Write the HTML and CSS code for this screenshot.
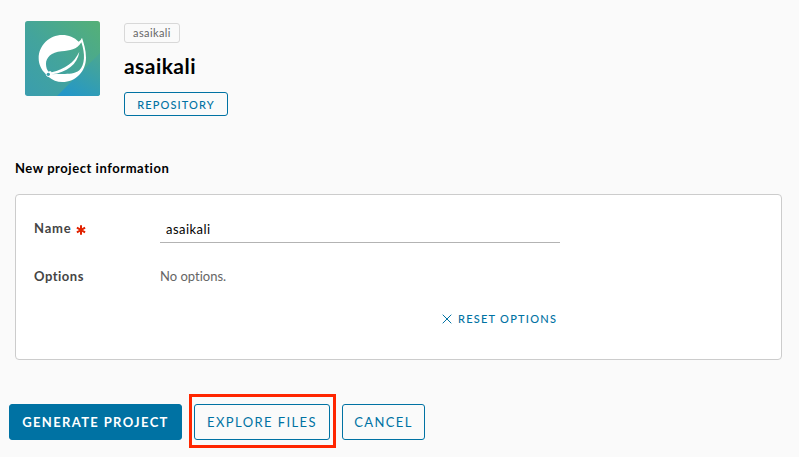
FILE: index.html
```html
<!DOCTYPE html>
<html lang="en">
<head>
<meta charset="utf-8">
<title>New project</title>
<link rel="stylesheet" href="styles.css">
</head>
<body>
<header class="header">
  <svg class="logo" viewBox="30 33 225 225" aria-hidden="true">
    <defs>
      <linearGradient id="green" x1="0" y1="1" x2="1" y2="0"><stop offset="0" stop-color="#3a9dae"/><stop offset=".45" stop-color="#43a49c"/><stop offset="1" stop-color="#55b077"/></linearGradient>
      <linearGradient id="blue" x1="0.2" y1="1" x2=".8" y2="0"><stop offset="0" stop-color="#2397c9"/><stop offset="1" stop-color="#48a694"/></linearGradient>
    </defs>
    <rect x="30" y="33" width="225" height="225" rx="8" fill="url(#green)"/>
    <path d="M126 258L255 129V250Q255 258 247 258Z" fill="url(#blue)"/>
    <path fill="#fff" fill-rule="evenodd" d="M201 83C206 99 213 119 213 143C213 184 182 216 142 216C126 216 112 210 101 201C96 201 93 197 92 192C79 180 71 163 71 145C71 106 103 75 142 75C161 75 178 82 191 95Q198 91 201 83ZM199 97C186 119 164 122 140 124C108 127 93 143 93 162C93 172 96 180 101 185C106 182 109 184 110 187C150 176 176 160 193 125C188 163 155 187 110 193C144 190 173 197 193 181C210 165 211 131 199 97Z"/>
    <circle cx="100" cy="193" r="5" fill="#3d9fac"/>
  </svg>
  <div class="summary">
    <span class="tag">asaikali</span>
    <h1 class="title">asaikali</h1>
    <button class="btn repository"><span>REPOSITORY</span></button>
  </div>
</header>
<main>
  <h2 class="heading">New project information</h2>
  <section class="card">
    <div class="row">
      <label class="label" for="name"><span class="name-text">Name</span>
        <svg class="required" viewBox="0 0 10 10" aria-hidden="true"><path d="M5 .3V9.7M.9 2.7L9.1 7.3M9.1 2.7L.9 7.3" stroke="#e12200" stroke-width="2"/></svg>
      </label>
      <input class="field" id="name" value="asaikali">
    </div>
    <div class="row options">
      <span class="label"><span class="options-text">Options</span></span>
      <span class="none">No options.</span>
    </div>
    <button class="reset">
      <svg class="cross" viewBox="0 0 10 10" aria-hidden="true"><path d="M.7.7L9.3 9.3M9.3.7L.7 9.3" stroke="currentColor"/></svg>
      <span>RESET OPTIONS</span>
    </button>
  </section>
  <div class="actions">
    <button class="btn generate"><span>GENERATE PROJECT</span></button>
    <div class="highlight"><button class="btn explore"><span>EXPLORE FILES</span></button></div>
    <button class="btn cancel"><span>CANCEL</span></button>
  </div>
</main>
</body>
</html>
```
FILE: styles.css
```css
* { box-sizing: border-box; }
body { margin: 0; background: #fafafa; color: #000; font-family: Lato, "Open Sans", sans-serif; font-size: 13px; font-variant-ligatures: none; }
button, input { font: inherit; }
button span { white-space: nowrap; }
.header { display: flex; gap: 24px; padding: 21px 25px 0; }
.logo { width: 75px; height: 75px; flex: none; }
.summary { display: flex; flex-direction: column; align-items: flex-start; padding-top: 2px; }
.tag { width: 56px; height: 20px; border: 1px solid #d8d8d8; border-radius: 3px; color: #666; font-size: 11px; line-height: 18px; text-align: center; letter-spacing: .4px; }
.title { margin: 11px 0 0; font-size: 21px; line-height: 24px; letter-spacing: .45px; }
.btn { display: flex; align-items: center; justify-content: center; height: 36px; padding: 0; border: 1px solid #0072a3; border-radius: 3px; background: transparent; color: #0072a3; font-size: 13px; letter-spacing: 1.4px; }
.repository { width: 104px; height: 24px; margin-top: 14px; font-size: 11px; letter-spacing: 1.1px; font-weight: 500; }
.heading { margin: 42px 0 0 15px; font-size: 13px; line-height: 20px; letter-spacing: .55px; }
.card { width: 767px; height: 166px; margin: 16px 0 0 15px; padding: 21px 18px; border: 1px solid #ccc; border-radius: 4px; background: #fff; }
.row { display: flex; height: 27px; }
.label { display: flex; align-items: center; gap: 5px; width: 126px; height: 24px; color: #454545; font-weight: 700; letter-spacing: .5px; }
.name-text { letter-spacing: .8px; }
.required { width: 10px; height: 10px; margin-top: 4px; }
.field { width: 400px; padding: 0 6px 1px; border: 0; border-bottom: 1px solid #b3b3b3; background: transparent; outline: 0; letter-spacing: .45px; }
.options { margin-top: 21px; }
.none { color: #666; line-height: 24px; }
.reset { display: flex; align-items: center; gap: 6px; height: 20px; margin: 17px 0 0 408px; padding: 0; border: 0; background: none; color: #0072a3; font-size: 11px; letter-spacing: 1.25px; font-weight: 500; }
.cross { width: 10px; height: 10px; margin-top: 1px; }
.actions { display: flex; align-items: flex-start; margin: 33px 0 0 9px; }
.generate { width: 173px; margin-top: 11px; background: #0072a3; color: #fff; font-weight: 700; letter-spacing: 1.35px; }
.highlight { width: 147px; height: 54px; margin: 1px 6px 0 7px; padding: 7px 2px; border: 3px solid #ff2600; }
.explore { width: 136px; }
.cancel { width: 83px; margin-top: 11px; }
```
